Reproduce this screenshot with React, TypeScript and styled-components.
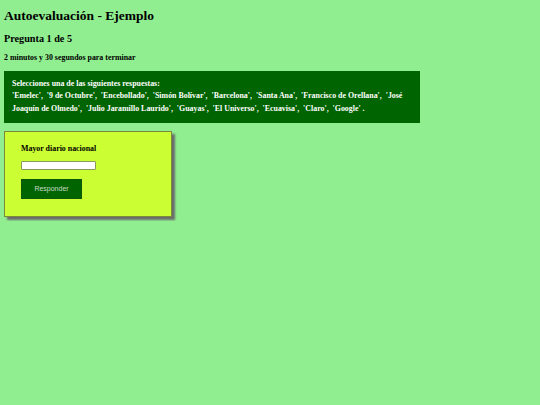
import React from "react";
import styled, { createGlobalStyle } from "styled-components";

const Global = createGlobalStyle`
  html, body { margin: 0; padding: 0; background: #90ee90; }
  body { font-family: "Liberation Serif", "Times New Roman", serif; color: #000; }
`;

const Page = styled.div`
  padding: 4px;
  display: flex;
  flex-direction: column;
  align-items: flex-start;
`;

const Title = styled.h1`
  margin: 4px 0 0;
  font-size: 13.5px;
  line-height: 16px;
  font-weight: bold;
`;

const Subtitle = styled.h2`
  margin: 9px 0 0;
  font-size: 10.2px;
  line-height: 12px;
  font-weight: bold;
`;

const Timer = styled.p`
  margin: 8px 0 0;
  font-size: 7.9px;
  line-height: 10px;
  font-weight: bold;
`;

const Options = styled.div`
  box-sizing: border-box;
  margin-top: 8px;
  width: 416px;
  padding: 6.75px 8px 7.75px;
  background: #006400;
  color: #fff;
  font-size: 7.9px;
  line-height: 12.5px;
  font-weight: bold;
  white-space: pre-wrap;
`;

const Card = styled.div`
  box-sizing: border-box;
  margin-top: 8px;
  width: 168px;
  height: 86px;
  padding: 12px 16px 0;
  background: #ccff33;
  border: 1px solid #7a8a3a;
  box-shadow: 3px 3px 2px #6b6b6b;
  display: flex;
  flex-direction: column;
  align-items: flex-start;
`;

const Label = styled.label`
  font-size: 7.9px;
  line-height: 10px;
  font-weight: bold;
`;

const Input = styled.input`
  box-sizing: border-box;
  margin-top: 6.5px;
  width: 75px;
  height: 9px;
  padding: 0;
  border: 1px solid #8a9a5a;
  border-radius: 1px;
  background: #fff;
`;

const Button = styled.button`
  box-sizing: border-box;
  margin-top: 9px;
  width: 61px;
  height: 20px;
  border: 1px solid #0a5a0a;
  background: #006400;
  color: #c8dcc8;
  font-family: "Liberation Sans", Arial, sans-serif;
  font-size: 7px;
  padding: 0;
`;

const options = [
  "Emelec",
  "9 de Octubre",
  "Encebollado",
  "Simón Bolívar",
  "Barcelona",
  "Santa Ana",
  "Francisco de Orellana",
  "José Joaquín de Olmedo",
  "Julio Jaramillo Laurido",
  "Guayas",
  "El Universo",
  "Ecuavisa",
  "Claro",
  "Google",
];

export default function App() {
  return (
    <>
      <Global />
      <Page>
        <Title>Autoevaluación - Ejemplo</Title>
        <Subtitle>Pregunta 1 de 5</Subtitle>
        <Timer>2 minutos y 30 segundos para terminar</Timer>
        <Options>
          {"Selecciones una de las siguientes respuestas:"}
          <br />
          {options.map((o) => `'${o}'`).join(",  ") + " ."}
        </Options>
        <Card>
          <Label>Mayor diario nacional</Label>
          <Input type="text" />
          <Button>Responder</Button>
        </Card>
      </Page>
    </>
  );
}
